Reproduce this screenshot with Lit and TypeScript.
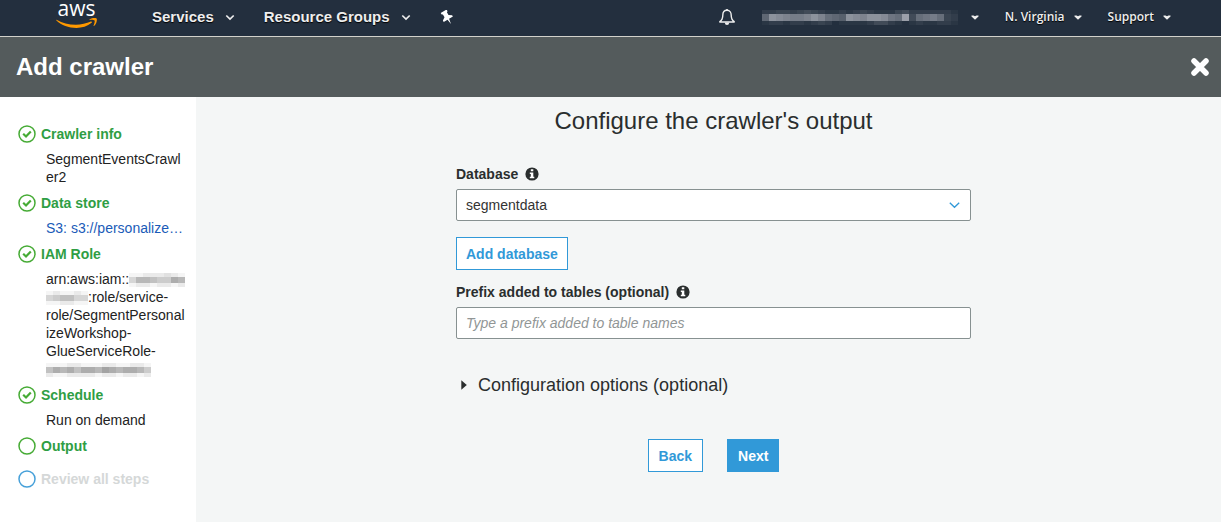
import { LitElement, html, css, svg } from "lit";
import { customElement, property } from "lit/decorators.js";

@customElement("pixel-mask")
export class PixelMask extends LitElement {
  /* One string per row of cells; each letter is an opacity step, a dot is empty. */
  @property({ attribute: false }) rows: string[] = [];
  @property({ attribute: false }) heights: number[] = [];
  @property({ type: Number }) cell = 7;

  static styles = css`
    :host { display: inline-block; line-height: 0; }
    svg { display: block; fill: currentColor; shape-rendering: crispEdges; }
  `;

  render() {
    const cols = Math.max(...this.rows.map((r) => r.length));
    const total = this.heights.reduce((a, b) => a + b, 0);
    let y = 0;
    const cells = this.rows.map((row, i) => {
      const top = y;
      y += this.heights[i];
      return [...row].map((c, x) =>
        c === "." ? "" : svg`<rect x=${x * this.cell} y=${top} width=${this.cell} height=${this.heights[i]} opacity=${(c.charCodeAt(0) - 96) / 20}></rect>`
      );
    });
    return html`<svg width=${cols * this.cell} height=${total} aria-hidden="true">${cells}</svg>`;
  }
}

@customElement("console-nav")
export class ConsoleNav extends LitElement {
  static styles = css`
    :host {
      display: block;
      background: #232f3e;
      border-bottom: 1px solid #d2d2cb;
      color: #eee;
      font-family: "Liberation Sans", Arial, sans-serif;
    }
    nav { display: flex; align-items: center; height: 34px; padding: 0 50px 2px 56px; }
    a, button { color: inherit; text-decoration: none; }
    button {
      display: flex; align-items: center; padding: 0; border: 0; background: none;
      font: bold 15px/20px "Liberation Sans", Arial, sans-serif;
      text-shadow: 0 1px 1px #000; cursor: pointer;
    }
    svg { display: block; }
    .word { font: 500 21px "Open Sans", "Noto Sans", sans-serif; fill: #fff; }
    .main { display: flex; align-items: center; gap: 29px; margin-left: 55px; }
    .main button { gap: 11px; }
    .side { display: flex; align-items: center; gap: 26px; margin-left: auto; }
    .side button { gap: 9px; font: 600 12px/20px "Open Sans", "Noto Sans", sans-serif; }
    .side .account { gap: 13px; color: #b9bcc4; }
  `;

  private chevron() {
    return html`<svg width="10" height="7" viewBox="0 0 10 7" aria-hidden="true"><path d="M1.3 1.5 5 5 8.700 1.500" fill="none" stroke="#eee" stroke-width="1.7"/></svg>`;
  }

  private caret() {
    return html`<svg width="8" height="5" viewBox="0 0 8 5" aria-hidden="true"><path d="M.5 .5H2.500L4 1.300 5.500 .5H7.500V1.500L4 4.800 .5 1.500Z" fill="#eee"/></svg>`;
  }

  render() {
    return html`<nav aria-label="Console">
      <a class="logo" href="#">
        <svg width="41" height="32" viewBox="0 0 41 32" role="img" aria-label="AWS home">
          <text class="word" x="20.500" y="15" text-anchor="middle">aws</text>
          <g transform="translate(0 16)" fill="#f90">
            <path d="M.4 3.500C.1 3.100.5 2.600 1 2.900 6 5.800 12.500 7.700 20 7.700c5 0 10.500-1.100 14.900-3.100.9-.4 1.500.6.7 1.200C31.500 9.200 25.800 11 20.500 11 12.500 11 5.600 8.200.4 3.500Z"/>
            <path d="M33.700 2.300C35.800.900 39.200.7 40.600 1.400c.8 1-.1 5.400-2.300 7.300-.5.4-.9.2-.7-.3.600-1.400 1.400-4 1-4.800-.5-.8-3.200-.9-4.600-.7-.5.1-.7-.3-.3-.6Z"/>
          </g>
        </svg>
      </a>
      <div class="main">
        <button>Services ${this.chevron()}</button>
        <button>Resource Groups ${this.chevron()}</button>
        <button aria-label="Pin shortcuts">
          <svg width="14" height="15" viewBox="0 0 14 15" aria-hidden="true">
            <path transform="rotate(-30 7 7)" d="M3.600.3H10.400V2.200L9.300 2.800V6L12.300 8V9.600H7.900L7 15 6.100 9.600H1.700V8L4.700 6V2.800L3.600 2.200Z" fill="#fff"/>
          </svg>
        </button>
      </div>
      <div class="side">
        <button aria-label="Notifications">
          <svg width="18" height="18" viewBox="0 0 18 18" aria-hidden="true">
            <path d="M9 2.300C6 2.300 4.800 4.700 4.800 7.200c0 3.600-1.400 5.300-3 6.300V14h14.400v-.5c-1.600-1-3-2.700-3-6.300C13.200 4.700 12 2.300 9 2.300Z" fill="none" stroke="#eee" stroke-width="1.400" stroke-linejoin="round"/>
            <path d="M8.200 1h1.600v1.800H8.200ZM6.700 14.500h4.600Q11 17 9 17T6.700 14.500Z" fill="#eee"/>
          </svg>
        </button>
        <button class="account" aria-label="Account">
          <pixel-mask .rows=${["bbccbcdcbaababcbaaacdbbbbbba", "hnmlkklnlihgnmlnnmjipdijkicb", "abbabbabcb.aaaabddba.abaabba"]} .heights=${[4, 7, 4]}></pixel-mask>
          ${this.caret()}
        </button>
        <button>N. Virginia ${this.caret()}</button>
        <button>Support ${this.caret()}</button>
      </div>
    </nav>`;
  }
}

type StepState = "done" | "current" | "pending";

@customElement("wizard-step")
export class WizardStep extends LitElement {
  @property() name = "";
  @property() state: StepState = "done";

  static styles = css`
    :host { display: block; font: 14px/18px "Liberation Sans", Arial, sans-serif; color: #222; }
    .title { display: flex; align-items: center; gap: 5px; height: 18px; color: #2f9e44; font-weight: bold; }
    .title.pending { color: #d5d8d8; }
    svg { flex: none; color: #46ab35; }
    .pending svg { color: #46a0d9; }
    .detail { margin: 7px 9px 0 28px; overflow-wrap: anywhere; }
  `;

  render() {
    return html`
      <div class="title ${this.state}">
        <svg width="18" height="18" viewBox="0 0 18 18" fill="none" stroke="currentColor" aria-hidden="true">
          <circle cx="9" cy="9" r="8" stroke-width="1.500"></circle>
          ${this.state === "done" ? svg`<path d="M5.200 8.800 8 11.500 12.800 6.500" stroke-width="2.200"/>` : ""}
        </svg>
        <span>${this.name}</span>
      </div>
      ${this.state === "done" ? html`<div class="detail"><slot></slot></div>` : ""}
    `;
  }
}

@customElement("app-root")
export class AppRoot extends LitElement {
  static styles = css`
    :host {
      display: flex; flex-direction: column; min-height: 100vh;
      background: #f4f6f6; color: #2a2e2e;
      font: 14px/18px "Liberation Sans", Arial, sans-serif;
    }
    * { box-sizing: border-box; }
    .bar {
      display: flex; align-items: center; justify-content: space-between;
      height: 60px; padding: 0 11px 0 16px; background: #545b5c; color: #fff;
    }
    h1 { margin: 0; font-size: 24px; line-height: 30px; }
    .close { padding: 0; border: 0; background: none; cursor: pointer; }
    svg { display: block; }
    .body { flex: 1; display: flex; }
    aside { flex: none; width: 196px; padding: 28px 0 28px 18px; background: #fff; }
    ol { display: flex; flex-direction: column; gap: 8px; margin: 0; padding: 0; list-style: none; }
    .last { margin-top: 7px; }
    .path { display: block; overflow: hidden; text-overflow: ellipsis; white-space: nowrap; color: #1a5bb8; text-decoration: none; }
    pixel-mask { color: #333; vertical-align: middle; }
    main { flex: 1; display: flex; flex-direction: column; align-items: center; padding: 9px 0 32px 10px; }
    h2 { margin: 0 0 29px; font-size: 24px; line-height: 30px; font-weight: normal; }
    form { display: flex; flex-direction: column; width: 100%; max-width: 515px; }
    .label { display: flex; align-items: center; gap: 7px; margin-bottom: 6px; font-weight: bold; }
    select, input {
      width: 100%; height: 32px; padding: 0 9px; border: 1px solid #879191; border-radius: 2px;
      background-color: #fff; color: #333; font: inherit;
    }
    .pick { display: grid; align-items: center; margin-bottom: 16px; }
    .pick > * { grid-area: 1 / 1; }
    .pick svg { justify-self: end; margin-right: 11px; pointer-events: none; }
    select { appearance: none; }
    input::placeholder { color: #919696; font-style: italic; opacity: 1; }
    .btn {
      height: 33px; padding: 0 10px; border: 1px solid #3199d8; background: #fff; color: #3199d8;
      font: bold 14px/18px "Liberation Sans", Arial, sans-serif; cursor: pointer;
    }
    .primary { background: #3199d8; color: #fff; }
    .add { align-self: flex-start; margin-bottom: 13px; padding: 0 9px; }
    details { margin-top: 35px; }
    summary { display: flex; align-items: center; gap: 11px; padding-left: 5px; font-size: 18px; line-height: 22px; list-style: none; cursor: pointer; }
    .actions { display: flex; justify-content: center; gap: 24px; margin-top: 43px; }
  `;

  private info() {
    return html`<svg width="14" height="14" viewBox="0 0 14 14" role="img" aria-label="Info">
      <circle cx="7" cy="7" r="6.600" fill="#2a2e2e"></circle>
      <path d="M5.800 2.300h2.500v1.900H5.800ZM4.800 5.400h3.500v4.400h1v1.500H4.800V9.800h1V6.900h-1Z" fill="#fff"/>
    </svg>`;
  }

  render() {
    return html`
      <console-nav></console-nav>
      <header class="bar">
        <h1>Add crawler</h1>
        <button class="close" aria-label="Close">
          <svg width="20" height="20" viewBox="0 0 20 20" aria-hidden="true">
            <path d="M4 4 16 16M16 4 4 16" stroke="#fff" stroke-width="5.500" stroke-linecap="round"/>
          </svg>
        </button>
      </header>
      <div class="body">
        <aside>
          <ol>
            <li><wizard-step name="Crawler info">SegmentEventsCrawler2</wizard-step></li>
            <li><wizard-step name="Data store"><a class="path" href="#">S3: s3://personalize-data</a></wizard-step></li>
            <li>
              <wizard-step name="IAM Role">arn:aws:iam::<pixel-mask .rows=${["aabbbcba", "dggfeehg", "abbabbab"]} .heights=${[4, 6, 4]}></pixel-mask><br /><pixel-mask .rows=${["abaaba", "deffdd", "aabbaa"]} .heights=${[4, 6, 4]}></pixel-mask>:role/service-<br />role/SegmentPersonalizeWorkshop-<br />GlueServiceRole-<br /><pixel-mask .rows=${["aaabbaaabbaabba", "fhghfhhgihghhge", "baabbbbabbabbab"]} .heights=${[4, 6, 4]}></pixel-mask></wizard-step>
            </li>
            <li><wizard-step name="Schedule">Run on demand</wizard-step></li>
            <li><wizard-step name="Output" state="current"></wizard-step></li>
            <li class="last"><wizard-step name="Review all steps" state="pending"></wizard-step></li>
          </ol>
        </aside>
        <main>
          <h2>Configure the crawler's output</h2>
          <form @submit=${(e: Event) => e.preventDefault()}>
            <div class="label"><label for="database">Database</label>${this.info()}</div>
            <div class="pick">
              <select id="database"><option>segmentdata</option></select>
              <svg width="11" height="7" viewBox="0 0 11 7" aria-hidden="true"><path d="M.8 .8 5.500 5.300 10.200 .8" fill="none" stroke="#3199d8" stroke-width="1.300"/></svg>
            </div>
            <button type="button" class="btn add">Add database</button>
            <div class="label"><label for="prefix">Prefix added to tables (optional)</label>${this.info()}</div>
            <input id="prefix" type="text" placeholder="Type a prefix added to table names" />
            <details>
              <summary>
                <svg width="6" height="10" viewBox="0 0 6 10" aria-hidden="true"><path d="M.3 .3 5.800 5 .3 9.700Z" fill="#2a2e2e"/></svg>
                Configuration options (optional)
              </summary>
            </details>
            <div class="actions">
              <button type="button" class="btn">Back</button>
              <button type="submit" class="btn primary">Next</button>
            </div>
          </form>
        </main>
      </div>
    `;
  }
}
